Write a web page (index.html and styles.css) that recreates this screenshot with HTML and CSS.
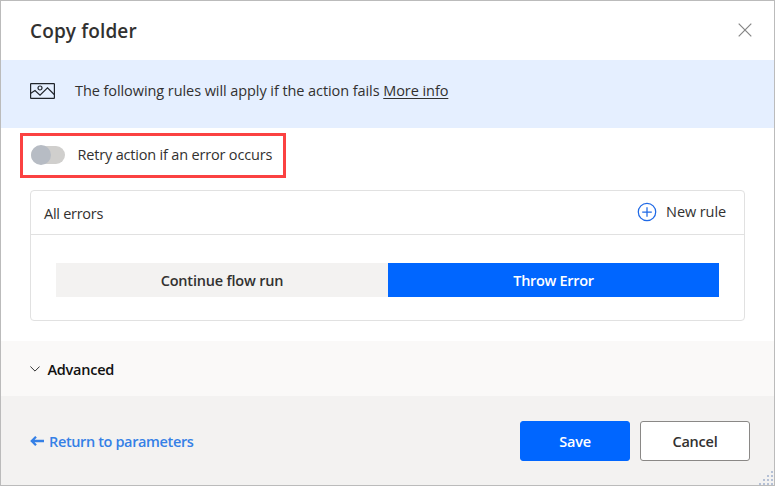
FILE: index.html
```html
<!DOCTYPE html>
<html lang="en">
<head>
<meta charset="utf-8">
<title>Copy folder</title>
<link rel="stylesheet" href="styles.css">
</head>
<body>
<main class="dialog">
  <header class="header">
    <h1 class="title"><span class="t-title">Copy folder</span></h1>
    <svg class="close" width="14" height="14" viewBox="0 0 14 14"><path d="M.7.7 13.3 13.3M13.3.7.7 13.3" fill="none" stroke="#858585" stroke-width="1.2"/></svg>
  </header>
  <section class="banner">
    <svg class="picture" width="25" height="16" viewBox="0 0 25 16" fill="none" stroke="#20242b" stroke-width="1.2"><rect x=".6" y=".6" width="23.8" height="14.8" rx=".5"/><circle cx="10" cy="5" r="2"/><path d="M.8 10.2 5 7.6 10 12.2 17.5 4.8 24.2 11.5"/></svg>
    <p class="message"><span class="t-message">The following rules will apply if the action fails</span> <a class="more">More info</a></p>
  </section>
  <section class="content">
    <div class="retry">
      <span class="toggle"><span class="knob"></span></span>
      <span class="t-retry">Retry action if an error occurs</span>
    </div>
    <div class="card">
      <div class="card-head">
        <span class="t-all">All errors</span>
        <span class="new-rule">
          <svg width="20" height="20" viewBox="0 0 20 20" fill="none" stroke="#1f69e6" stroke-width="1.25"><circle cx="10" cy="10" r="8.7"/><path d="M10 5.2v9.6M5.2 10h9.6"/></svg>
          <span class="t-new">New rule</span>
        </span>
      </div>
      <div class="segments">
        <div class="segment"><span class="t-continue">Continue flow run</span></div>
        <div class="segment selected"><span class="t-throw">Throw Error</span></div>
      </div>
    </div>
  </section>
  <section class="advanced">
    <svg width="10" height="6" viewBox="0 0 10 6"><path d="M.4.5 5 5.1 9.6.5" fill="none" stroke="#333" stroke-width="1"/></svg>
    <span class="t-advanced">Advanced</span>
  </section>
  <footer class="footer">
    <a class="return">
      <svg width="14" height="10" viewBox="0 0 14 10" fill="none" stroke="#3580e6" stroke-width="2.3"><path d="M1.8 5H14M6 .8 1.8 5 6 9.2"/></svg>
      <span class="t-return">Return to parameters</span>
    </a>
    <div class="actions">
      <button class="button primary"><span class="t-save">Save</span></button>
      <button class="button"><span class="t-cancel">Cancel</span></button>
    </div>
    <svg class="grip" width="15" height="15" viewBox="0 0 15 15" fill="#b5c1d6"><path d="M12 1h2v2h-2zM8 5h2v2H8zM12 5h2v2h-2zM4 9h2v2H4zM8 9h2v2H8zM12 9h2v2h-2zM0 13h2v2H0zM4 13h2v2H4zM8 13h2v2H8zM12 13h2v2h-2z"/></svg>
  </footer>
</main>
</body>
</html>
```
FILE: styles.css
```css
* { box-sizing: border-box; }
body { margin: 0; font: 14.5px/20px "Open Sans", "Noto Sans", sans-serif; color: #323130; }
h1, p { margin: 0; }
svg { display: block; flex: none; }
span, a { white-space: nowrap; }
.dialog { width: 775px; height: 486px; border: 1px solid #bbb; background: #fff; display: flex; flex-direction: column; overflow: hidden; }
.header { height: 59px; padding: 0 22px 0 29px; display: flex; align-items: center; justify-content: space-between; }
.close { margin-top: -1px; }
.title { font-size: 19px; line-height: 26px; font-weight: 600; letter-spacing: .13px; }
.banner { height: 68px; padding: 21px 29px; background: #e5efff; display: flex; }
.picture { margin: 2px 20px 0 0; }
.message { letter-spacing: -.075px; }
.more { text-decoration: underline; text-underline-offset: 2px; }
.content { height: 213px; padding: 5px 29px 0 19px; }
.retry { width: 266px; height: 45px; border: 3px solid #fb4141; display: flex; align-items: center; padding: 0 0 2px 8px; gap: 12.5px; }
.t-retry { letter-spacing: -.18px; }
.toggle { width: 34px; height: 18px; border-radius: 9px; background: #d0cfcd; display: flex; align-items: center; }
.knob { width: 20px; height: 20px; flex: none; border-radius: 50%; background: #b7bcc4; }
.card { margin: 12px 0 0 10px; height: 131px; border: 1px solid #e1e1e1; border-radius: 4px; }
.card-head { height: 44px; border-bottom: 1px solid #e1e1e1; padding: 2px 18px 0 13px; display: flex; align-items: center; justify-content: space-between; }
.t-all { letter-spacing: -.27px; }
.t-new { letter-spacing: -.1px; }
.new-rule { display: flex; align-items: center; gap: 9px; margin-top: -4px; }
.segments { margin: 28px 25px 0; height: 34px; display: flex; font-weight: 600; }
.segment { flex: none; width: 332px; padding-top: 2px; background: #f3f2f1; display: flex; align-items: center; justify-content: center; }
.segment.selected { width: 331px; background: #06f; color: #fff; }
.t-continue { letter-spacing: -.2px; }
.t-throw { letter-spacing: -.3px; }
.advanced { height: 55px; padding: 1px 29px 0; background: #faf9f8; color: #111; font-weight: 600; display: flex; align-items: center; gap: 7.5px; }
.t-advanced { letter-spacing: -.25px; padding-top: 2px; }
.footer { position: relative; flex: 1; background: #f3f2f1; padding: 25px 24px 0 29px; display: flex; justify-content: space-between; align-items: flex-start; }
.return { height: 40px; display: flex; align-items: center; gap: 5px; color: #3580e6; font-weight: 600; }
.t-return { letter-spacing: -.37px; padding-top: 2px; }
.actions { display: flex; gap: 10px; }
.button { width: 110px; height: 40px; padding: 2px 0 0; border: 1px solid #8a8886; border-radius: 3px; background: #fff; font: inherit; font-weight: 600; letter-spacing: -.22px; color: #323130; }
.button.primary { border-color: #06f; background: #06f; color: #fff; }
.grip { position: absolute; right: 0; bottom: 0; }
```
